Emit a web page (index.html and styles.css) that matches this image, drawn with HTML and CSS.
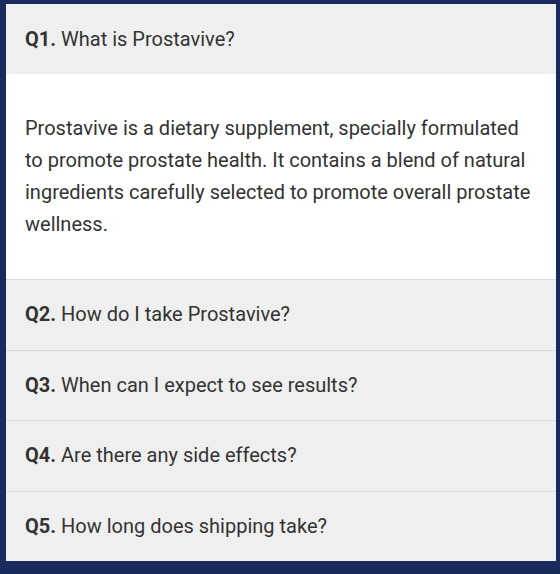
FILE: index.html
```html
<!DOCTYPE html>
<html lang="en">
<head>
<meta charset="utf-8">
<title>FAQ</title>
<link rel="stylesheet" href="styles.css">
</head>
<body>
<div class="faq">
  <div class="item open">
    <div class="question"><strong>Q1.</strong> What is Prostavive?</div>
    <div class="answer">Prostavive is a dietary supplement, specially formulated to promote prostate health. It contains a blend of natural ingredients carefully selected to promote overall prostate wellness.</div>
  </div>
  <div class="item">
    <div class="question"><strong>Q2.</strong> How do I take Prostavive?</div>
  </div>
  <div class="item">
    <div class="question"><strong>Q3.</strong> When can I expect to see results?</div>
  </div>
  <div class="item">
    <div class="question"><strong>Q4.</strong> Are there any side effects?</div>
  </div>
  <div class="item">
    <div class="question"><strong>Q5.</strong> How long does shipping take?</div>
  </div>
</div>
</body>
</html>
```

FILE: styles.css
```css
html, body {
  margin: 0;
  padding: 0;
  background: #1a2a5c;
  height: 100%;
}
body {
  padding: 4px 4px 0 6px;
  box-sizing: border-box;
  font-family: Roboto, "Liberation Sans", sans-serif;
  color: #333333;
}
.faq {
  display: flex;
  flex-direction: column;
  background: #efefef;
}
.item + .item {
  border-top: 1px solid #dcdcdc;
}
.question {
  height: 70px;
  line-height: 70px;
  padding: 0 19px;
  font-size: 20px;
  background: #efefef;
  white-space: nowrap;
}
.item + .item .question {
  height: 69.5px;
  line-height: 69.5px;
}
.question strong {
  font-weight: 700;
}
.answer {
  background: #ffffff;
  padding: 38px 19px 39px;
  font-size: 20px;
  line-height: 32px;
}
```
